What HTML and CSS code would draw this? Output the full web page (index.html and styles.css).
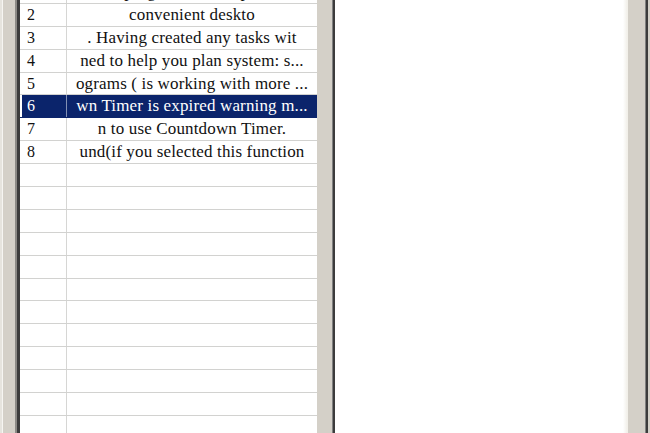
FILE: index.html
```html
<!DOCTYPE html>
<html>
<head>
<meta charset="utf-8">
<link rel="stylesheet" href="styles.css">
</head>
<body>
<div class="window">
  <div class="edge"></div>
  <div class="list-frame">
    <div class="list">
      <div class="row"><div class="num">1</div><div class="txt">The program is a simple and</div></div>
      <div class="row"><div class="num">2</div><div class="txt">convenient deskto</div></div>
      <div class="row"><div class="num">3</div><div class="txt">. Having created any tasks wit</div></div>
      <div class="row"><div class="num">4</div><div class="txt">ned to help you plan system: s...</div></div>
      <div class="row"><div class="num">5</div><div class="txt">ograms ( is working with more ...</div></div>
      <div class="row selected"><div class="num">6</div><div class="txt">wn Timer is expired warning m...</div></div>
      <div class="row"><div class="num">7</div><div class="txt">n to use Countdown Timer.</div></div>
      <div class="row"><div class="num">8</div><div class="txt">und(if you selected this function</div></div>
      <div class="row"><div class="num"></div><div class="txt"></div></div>
      <div class="row"><div class="num"></div><div class="txt"></div></div>
      <div class="row"><div class="num"></div><div class="txt"></div></div>
      <div class="row"><div class="num"></div><div class="txt"></div></div>
      <div class="row"><div class="num"></div><div class="txt"></div></div>
      <div class="row"><div class="num"></div><div class="txt"></div></div>
      <div class="row"><div class="num"></div><div class="txt"></div></div>
      <div class="row"><div class="num"></div><div class="txt"></div></div>
      <div class="row"><div class="num"></div><div class="txt"></div></div>
      <div class="row"><div class="num"></div><div class="txt"></div></div>
      <div class="row"><div class="num"></div><div class="txt"></div></div>
      <div class="row"><div class="num"></div><div class="txt"></div></div>
      <div class="row"><div class="num"></div><div class="txt"></div></div>
    </div>
  </div>
  <div class="gap"></div>
  <div class="panel"></div>
  <div class="gap2"></div>
  <div class="next-panel"></div>
</div>
</body>
</html>
```

FILE: styles.css
```css
html, body {
  margin: 0;
  padding: 0;
  width: 650px;
  height: 433px;
  overflow: hidden;
  background: #d4d0c8;
  font-family: "Liberation Serif", "Times New Roman", serif;
}

.window {
  display: flex;
  height: 433px;
  background: #d4d0c8;
}

.edge {
  width: 3px;
  margin-right: 12px;
  background: linear-gradient(to right, #e6e4de 0, #e6e4de 2px, #f6f5f2 2px);
  flex: none;
}

.list-frame {
  flex: none;
  width: 300px;
  border-left: 2px solid #8c8a86;
  background: #ffffff;
  overflow: hidden;
}

.list {
  border-left: 3px solid #3c3c3c;
  height: 460px;
  margin-top: -19px;
  background: #fff;
}

.row {
  display: flex;
  height: 22.9px;
  box-sizing: border-box;
  border-bottom: 1px solid #d2d2d0;
  color: #111;
  font-size: 17px;
  line-height: 21px;
}

.num {
  width: 47px;
  flex: none;
  box-sizing: border-box;
  padding-left: 7px;
  font-size: 16px;
  border-right: 1px solid #d6d6d4;
}

.txt {
  flex: 1;
  text-align: center;
  white-space: nowrap;
  overflow: hidden;
  letter-spacing: 0.15px;
}

.row.selected {
  background: linear-gradient(to right, #ffffff 0, #ffffff 2px, #0b246b 2px);
  color: #ffffff;
  border-bottom-color: #0b246b;
}

.row.selected .num {
  border-right-color: #8290b4;
}

.gap {
  width: 15px;
  flex: none;
}

.panel {
  flex: none;
  width: 295px;
  border-left: 1px solid #808080;
  box-shadow: inset 2px 0 0 #3c3c3c;
  background: linear-gradient(to right, #ffffff 0, #ffffff 290px, #f2f0ea 294px);
}

.gap2 {
  width: 17px;
  flex: none;
}

.next-panel {
  flex: 1;
  border-left: 1px solid #808080;
  box-shadow: inset 2px 0 0 #3c3c3c;
  background: #d4d0c8;
}
```
